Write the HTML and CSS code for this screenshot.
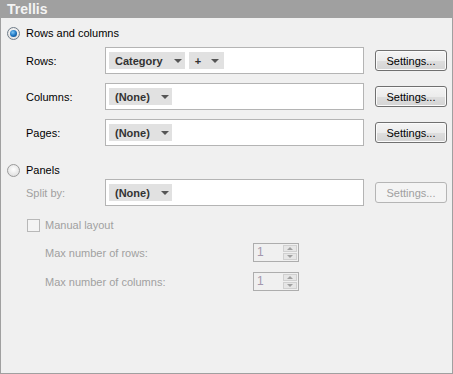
FILE: index.html
```html
<!DOCTYPE html>
<html lang="en">
<head>
    <meta charset="UTF-8">
    <title>Trellis</title>
    <link rel="stylesheet" href="styles.css">
</head>
<body>
    <div class="panel">
        <div class="header">Trellis</div>
        <div class="content">
            <div class="option">
                <span class="radio checked"></span>
                <span>Rows and columns</span>
            </div>

            <div class="field first">
                <span class="label">Rows:</span>
                <div class="box">
                    <span class="chip">Category<i class="arrow"></i></span>
                    <span class="chip plus">+<i class="arrow"></i></span>
                </div>
                <button class="button">Settings...</button>
            </div>
            <div class="field">
                <span class="label">Columns:</span>
                <div class="box">
                    <span class="chip">(None)<i class="arrow"></i></span>
                </div>
                <button class="button">Settings...</button>
            </div>
            <div class="field">
                <span class="label">Pages:</span>
                <div class="box">
                    <span class="chip">(None)<i class="arrow"></i></span>
                </div>
                <button class="button">Settings...</button>
            </div>

            <div class="option panels">
                <span class="radio"></span>
                <span>Panels</span>
            </div>
            <div class="field split">
                <span class="label disabled">Split by:</span>
                <div class="box">
                    <span class="chip">(None)<i class="arrow"></i></span>
                </div>
                <button class="button disabled" disabled>Settings...</button>
            </div>

            <div class="check-row">
                <span class="checkbox"></span>
                <span class="disabled">Manual layout</span>
            </div>
            <div class="spin-row">
                <span class="spin-label disabled">Max number of rows:</span>
                <div class="spin">
                    <span class="spin-value">1</span>
                    <div class="spin-buttons">
                        <span class="spin-btn"><i class="tri up"></i></span>
                        <span class="spin-btn"><i class="tri down"></i></span>
                    </div>
                </div>
            </div>
            <div class="spin-row">
                <span class="spin-label disabled">Max number of columns:</span>
                <div class="spin">
                    <span class="spin-value">1</span>
                    <div class="spin-buttons">
                        <span class="spin-btn"><i class="tri up"></i></span>
                        <span class="spin-btn"><i class="tri down"></i></span>
                    </div>
                </div>
            </div>
        </div>
    </div>
</body>
</html>
```

FILE: styles.css
```css
*{
   margin: 0;
   padding: 0;
   box-sizing: border-box;
}

body{
   font-family: "Liberation Sans", Arial, sans-serif;
   font-size: 11px;
   color: #000;
   background-color: #f0f0f0;
}

.panel{
   width: 453px;
   height: 374px;
   border: 1px solid #a0a0a0;
   border-top: none;
   background-color: #f0f0f0;
}

.header{
   height: 18px;
   line-height: 18px;
   padding-left: 6px;
   background-color: #a0a0a0;
   color: #f4f4f4;
   font-size: 14px;
   font-weight: bold;
}

.content{
   padding: 7px 0 0 6px;
}

.option{
   display: flex;
   align-items: center;
   height: 16px;
}

.option.panels{
   margin-top: 16px;
}

.radio{
   width: 13px;
   height: 13px;
   margin-right: 6px;
   border-radius: 50%;
   border: 1px solid #9a9a9a;
   background: radial-gradient(circle at 50% 40%, #ffffff 0%, #e4e4e4 70%, #d0d0d0 100%);
   display: flex;
   align-items: center;
   justify-content: center;
}

.radio.checked{
   border-color: #6f7c88;
}

.radio.checked::after{
   content: "";
   width: 7px;
   height: 7px;
   border-radius: 50%;
   background: radial-gradient(circle at 40% 35%, #7fc6f5 0%, #1f78c4 50%, #0b3b6e 100%);
}

.field{
   display: flex;
   align-items: center;
   margin-left: 19px;
   margin-top: 9px;
}

.field.first{
   margin-top: 6px;
}

.field.split{
   margin-top: 1px;
}

.label{
   width: 79px;
}

.disabled{
   color: #a0a0a0;
}

.box{
   width: 259px;
   height: 27px;
   border: 1px solid #b4b4b4;
   background-color: #fff;
   display: flex;
   align-items: center;
   gap: 4px;
   padding-left: 3px;
}

.chip{
   display: flex;
   align-items: center;
   height: 17px;
   padding: 0 3px 0 6px;
   background-color: #e1e1e1;
   color: #333;
   font-weight: bold;
}

.chip.plus{
   padding-right: 5px;
}

.arrow{
   display: inline-block;
   margin-left: 11px;
   border-left: 4px solid transparent;
   border-right: 4px solid transparent;
   border-top: 4px solid #555;
}

.chip.plus .arrow{
   margin-left: 10px;
}

.button{
   width: 72px;
   height: 21px;
   margin-left: 11px;
   font-family: "Liberation Sans", Arial, sans-serif;
   font-size: 11px;
   color: #000;
   border: 1px solid #707070;
   border-radius: 3px;
   background: linear-gradient(#f4f4f4 0%, #ececec 50%, #dedede 51%, #d4d4d4 100%);
   box-shadow: inset 0 0 0 1px #fbfbfb;
}

.button.disabled{
   color: #a0a0a0;
   border-color: #b5b5b5;
   background: #f4f4f4;
   box-shadow: none;
}

.check-row{
   display: flex;
   align-items: center;
   height: 16px;
   margin-top: 11px;
   margin-left: 20px;
}

.checkbox{
   width: 13px;
   height: 13px;
   margin-right: 5px;
   border: 1px solid #b8b8b8;
   background-color: #f4f4f4;
}

.spin-row{
   display: flex;
   align-items: center;
   margin-left: 38px;
   margin-top: 10px;
}

.spin-label{
   width: 208px;
}

.spin{
   width: 46px;
   height: 19px;
   border: 1px solid #adadad;
   background-color: #f0f0f0;
   display: flex;
   justify-content: space-between;
   padding: 1px;
}

.spin-value{
   padding-left: 2px;
   line-height: 15px;
   font-size: 12px;
   color: #a397ad;
}

.spin-buttons{
   width: 14px;
   display: flex;
   flex-direction: column;
   gap: 1px;
}

.spin-btn{
   flex: 1;
   background-color: #e6e6e6;
   border: 1px solid #d0d0d0;
   display: flex;
   align-items: center;
   justify-content: center;
}

.tri{
   border-left: 3px solid transparent;
   border-right: 3px solid transparent;
}

.tri.up{
   border-bottom: 3px solid #a0a0a0;
}

.tri.down{
   border-top: 3px solid #a0a0a0;
}
```
